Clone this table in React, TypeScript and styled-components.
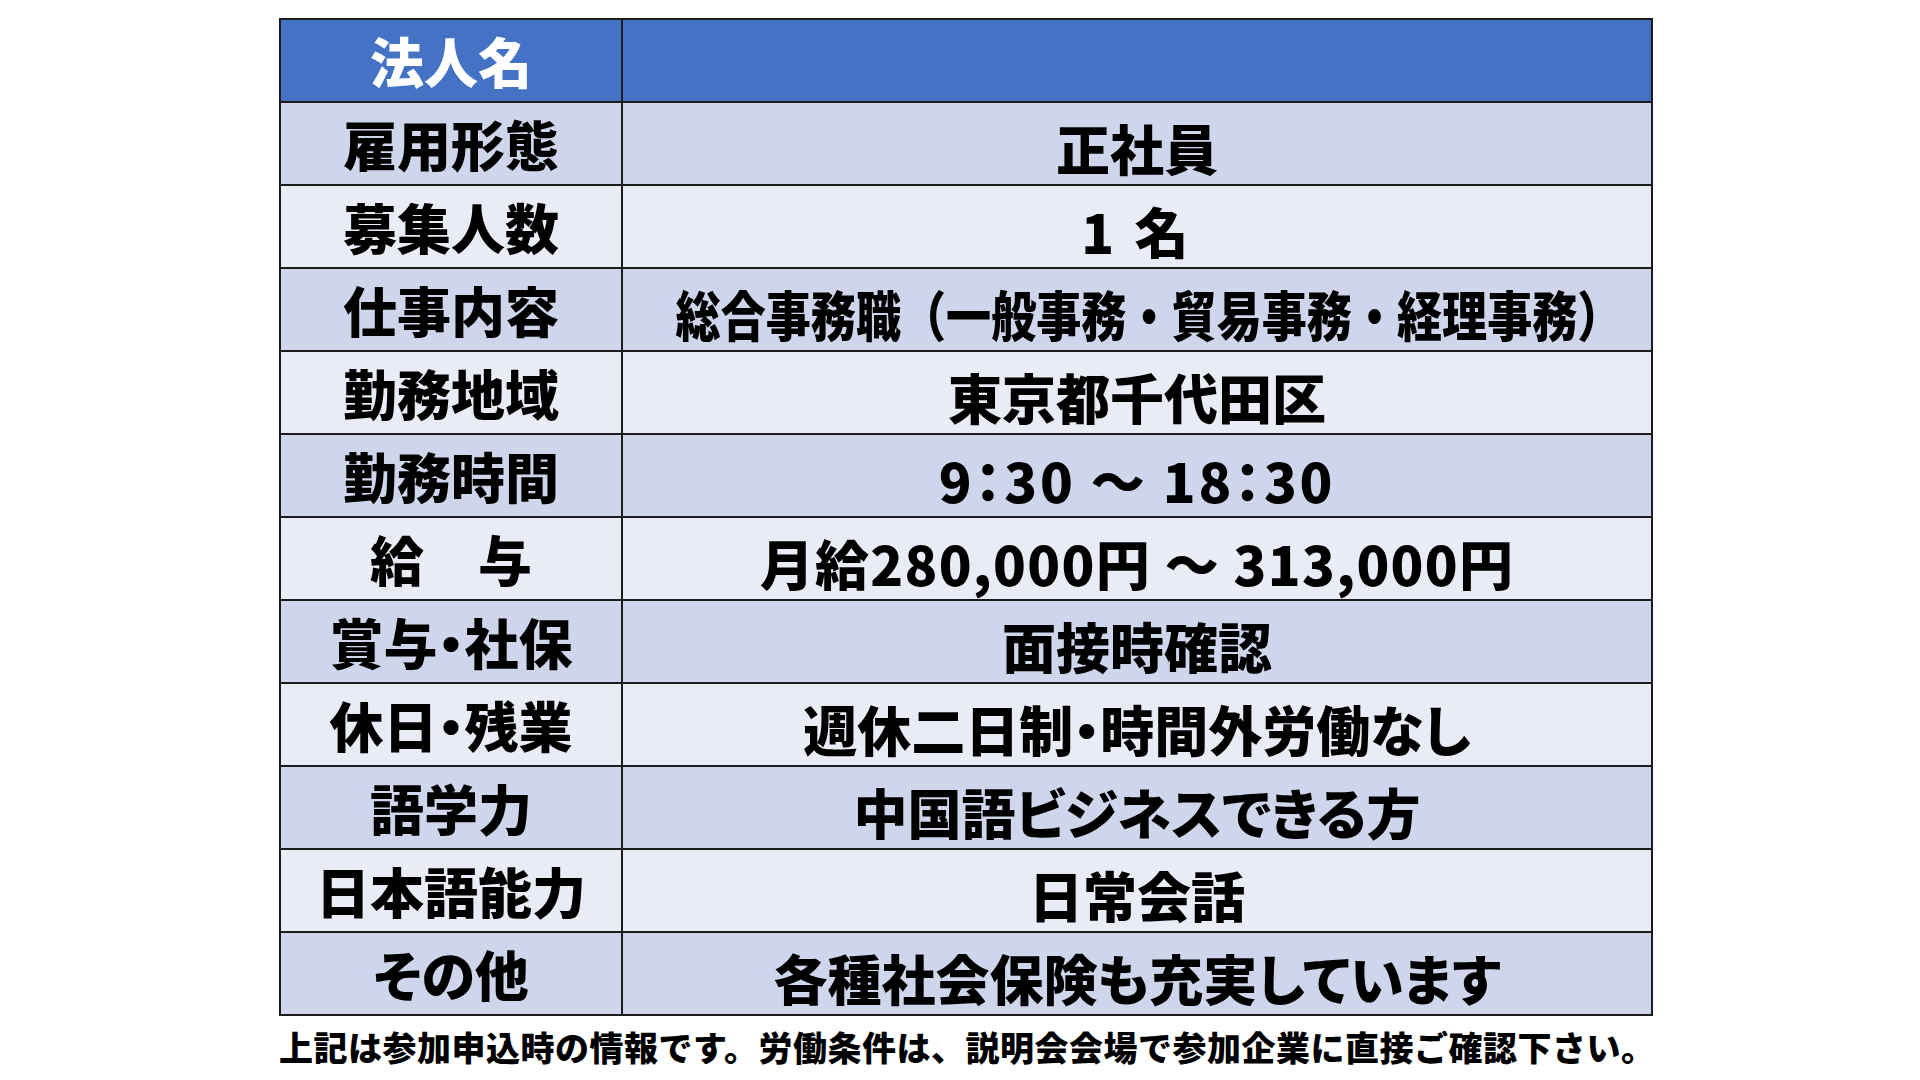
import styled, { createGlobalStyle } from 'styled-components'

const GlobalStyle = createGlobalStyle`
  html, body {
    margin: 0;
    padding: 0;
    background: #ffffff;
  }
  body {
    font-family: 'Noto Sans CJK JP', 'Noto Sans', sans-serif;
    color: #000000;
  }
`

const Page = styled.div`
  width: 1920px;
  height: 1080px;
  box-sizing: border-box;
  padding: 18px 0 0 279px;
`

const Sheet = styled.div`
  width: 1374px;
  display: flex;
  flex-direction: column;
`

const Table = styled.table`
  width: 1374px;
  border-collapse: collapse;
  table-layout: fixed;
  border: 2px solid #1c1c1c;
`

const Row = styled.tr<{ $tone: 'head' | 'dark' | 'light' }>`
  height: 83px;
  background: ${({ $tone }) => ($tone === 'head' ? '#4472c4' : $tone === 'dark' ? '#cfd5ea' : '#e9ebf5')};
  color: ${({ $tone }) => ($tone === 'head' ? '#ffffff' : '#000000')};
`

const LabelCell = styled.td`
  width: 340px;
  padding: 0;
  border: 2px solid #1c1c1c;
  text-align: center;
  vertical-align: middle;
  font-size: 54px;
  font-weight: 900;
  line-height: 1;
  white-space: pre;
  font-feature-settings: 'palt';
`

const ValueCell = styled.td`
  padding: 8px 0 0;
  border: 2px solid #1c1c1c;
  vertical-align: middle;
  font-size: 54px;
  font-weight: 900;
  line-height: 1;
  white-space: pre;
  font-feature-settings: 'palt';
  overflow: hidden;
`

const Center = styled.div<{ $spacing: number; $offset: number }>`
  display: flex;
  justify-content: center;
  letter-spacing: ${({ $spacing }) => $spacing}px;
  padding-left: ${({ $offset }) => $offset}px;
`

const Squeeze = styled.span<{ $x: number }>`
  display: inline-block;
  flex-shrink: 0;
  transform: scaleX(${({ $x }) => $x});
  transform-origin: center;
  font-feature-settings: normal;
`

const Note = styled.p`
  margin: 12px 0 0;
  font-size: 34px;
  font-weight: 900;
  line-height: 1.1;
  white-space: nowrap;
  letter-spacing: 0.5px;
`

type Item = { label: string; value: string; squeeze?: number; spacing?: number; offset?: number }

const rows: Item[] = [
  { label: '雇用形態', value: '正社員' },
  { label: '募集人数', value: '1 名', spacing: 4 },
  { label: '仕事内容', value: '総合事務職（一般事務・貿易事務・経理事務）', squeeze: 0.835, offset: 24 },
  { label: '勤務地域', value: '東京都千代田区' },
  { label: '勤務時間', value: '9：30 ～ 18：30', spacing: 2.8 },
  { label: '給　与', value: '月給280,000円 ～ 313,000円', spacing: 1.3 },
  { label: '賞与・社保', value: '面接時確認' },
  { label: '休日・残業', value: '週休二日制・時間外労働なし' },
  { label: '語学力', value: '中国語ビジネスできる方' },
  { label: '日本語能力', value: '日常会話' },
  { label: 'その他', value: '各種社会保険も充実しています' },
]

export default function App() {
  return (
    <Page>
      <GlobalStyle />
      <Sheet>
        <Table>
          <tbody>
            <Row $tone="head">
              <LabelCell>法人名</LabelCell>
              <ValueCell />
            </Row>
            {rows.map((r, i) => (
              <Row key={r.label} $tone={i % 2 === 0 ? 'dark' : 'light'}>
                <LabelCell>{r.label}</LabelCell>
                <ValueCell>
                  <Center $spacing={r.spacing ?? 0} $offset={r.offset ?? 0}>
                    {r.squeeze ? <Squeeze $x={r.squeeze}>{r.value}</Squeeze> : r.value}
                  </Center>
                </ValueCell>
              </Row>
            ))}
          </tbody>
        </Table>
        <Note>上記は参加申込時の情報です。労働条件は、説明会会場で参加企業に直接ご確認下さい。</Note>
      </Sheet>
    </Page>
  )
}
